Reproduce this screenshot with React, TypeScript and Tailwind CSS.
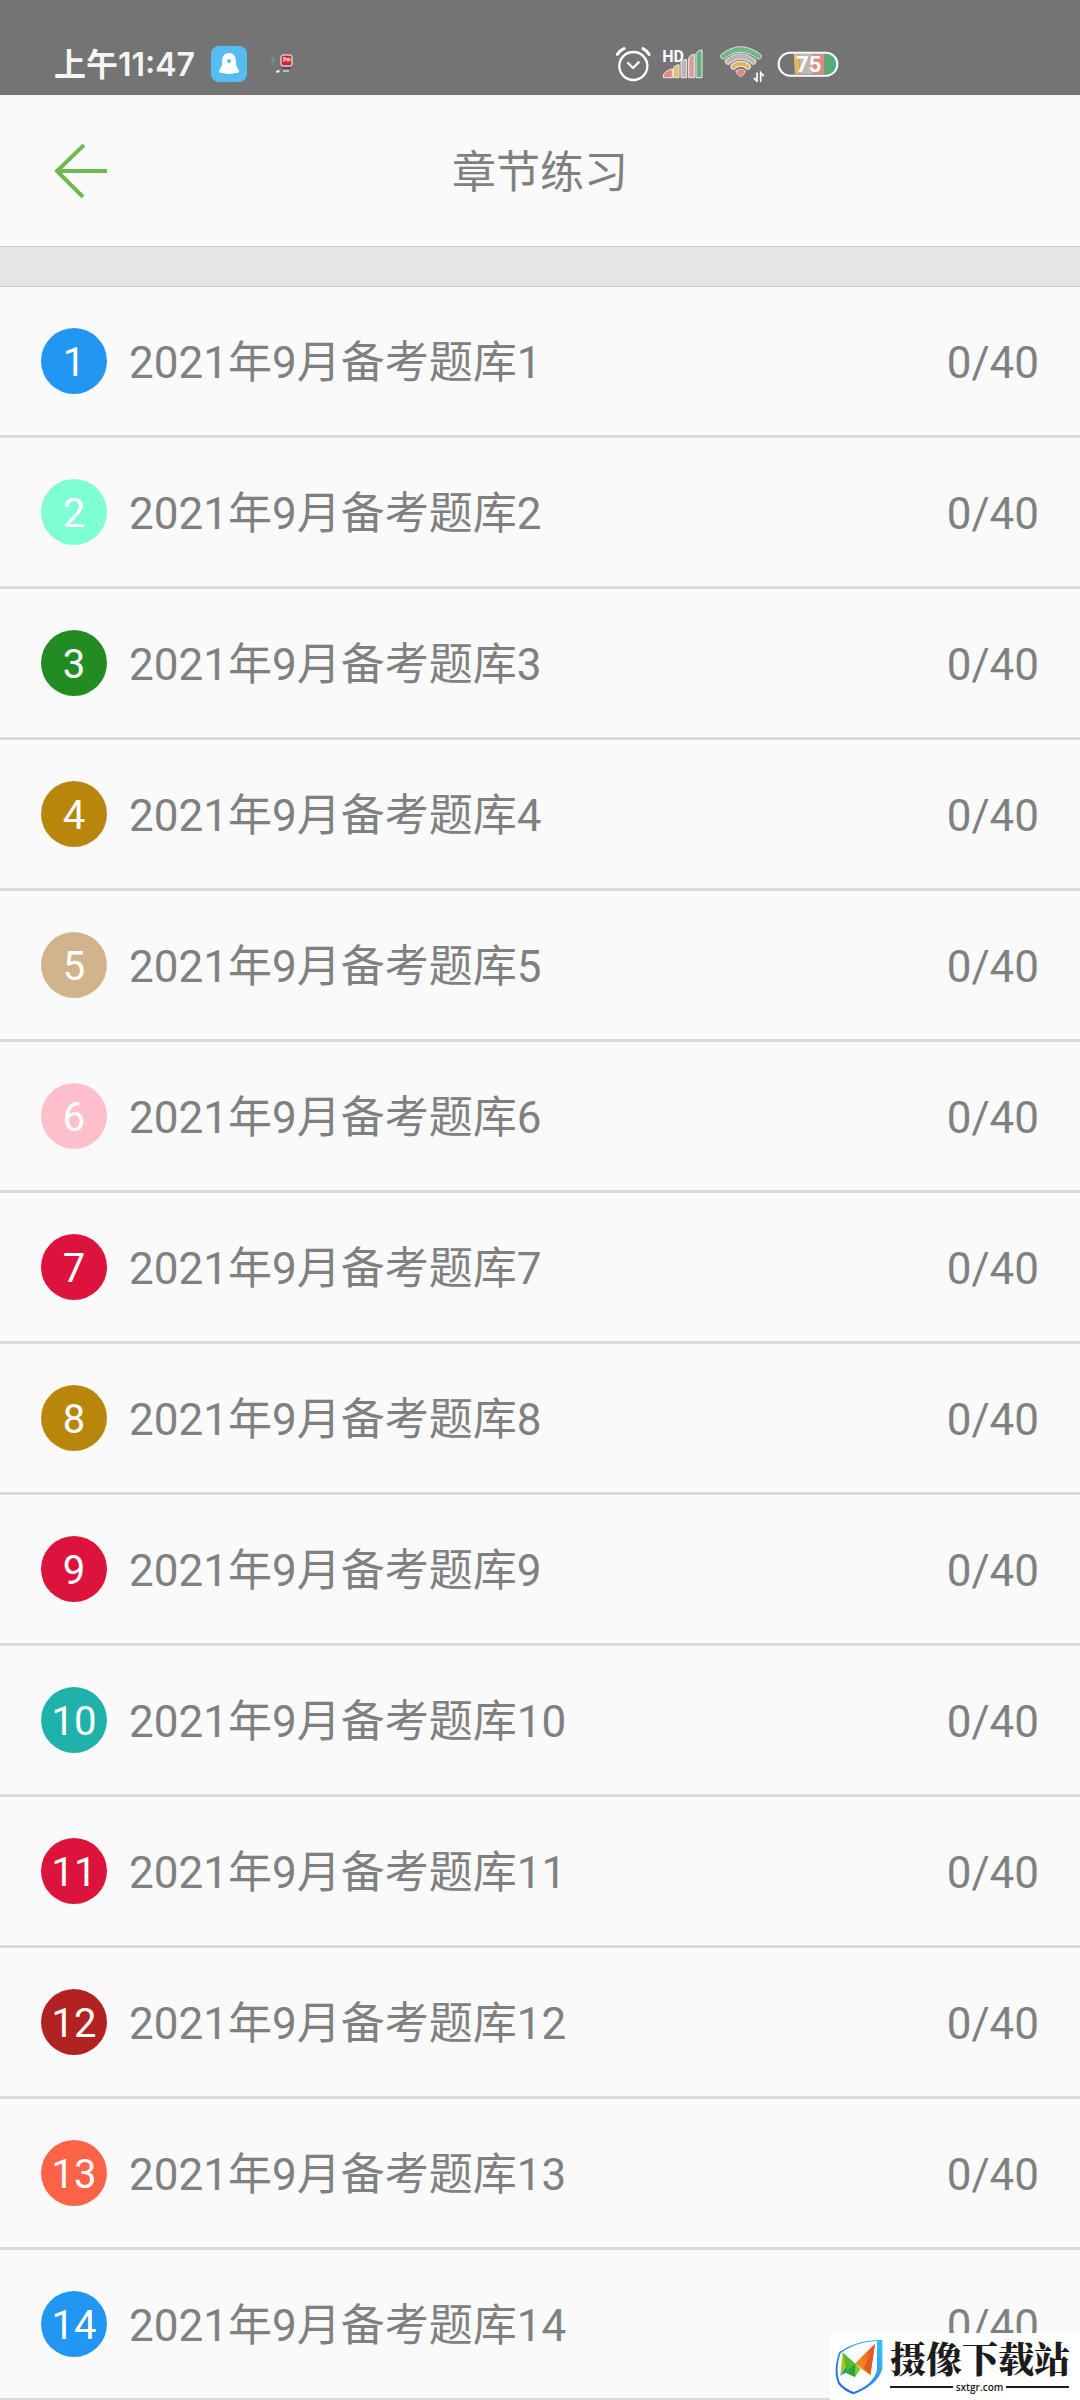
interface Chapter {
  id: number;
  color: string;
}

const chapters: Chapter[] = [
  { id: 1, color: "bg-[#2196f3]" },
  { id: 2, color: "bg-[#7fffd4]" },
  { id: 3, color: "bg-[#228b22]" },
  { id: 4, color: "bg-[#b8860b]" },
  { id: 5, color: "bg-[#d2b48c]" },
  { id: 6, color: "bg-[#ffc0cb]" },
  { id: 7, color: "bg-[#dc143c]" },
  { id: 8, color: "bg-[#b8860b]" },
  { id: 9, color: "bg-[#dc143c]" },
  { id: 10, color: "bg-[#20b2aa]" },
  { id: 11, color: "bg-[#dc143c]" },
  { id: 12, color: "bg-[#b22222]" },
  { id: 13, color: "bg-[#ff6347]" },
  { id: 14, color: "bg-[#2196f3]" },
];

function AlarmIcon() {
  return (
    <svg width="36" height="36" viewBox="80 78 108 108" fill="none" stroke="#fff" strokeLinecap="round" strokeLinejoin="round">
      <circle cx="135" cy="138" r="42" strokeWidth="7" />
      <path d="M119 129l15 15 17-17" strokeWidth="7" />
      <path d="M87 103q8-12 20-17M164 86q12 6 18 17" strokeWidth="9" />
    </svg>
  );
}

function SignalIcon() {
  return (
    <svg className="overflow-visible" width="40" height="30" viewBox="223 78 120 90">
      <g stroke="#eee" strokeWidth="3">
        <path d="M224 164v-8q10-16 27-18v26z" fill="#e8897e" />
        <path d="M254 164v-30q7-8 17-9v39z" fill="#e6bd6e" />
        <path d="M277 164v-47q8-8 17-8v55z" fill="#c0b4b4" />
        <path d="M300 164v-60q7-10 17-10v70z" fill="#d99e9a" />
        <path d="M322 164V92q6-11 18-11v83z" fill="#65b081" />
      </g>
      <text x="221" y="117" fill="#fff" fontFamily="Roboto, sans-serif" fontSize="48" fontWeight="700">HD</text>
    </svg>
  );
}

function WifiIcon() {
  return (
    <svg width="46" height="36" viewBox="387 78 138 108" fill="none" strokeLinecap="round">
      <g stroke="#f0f0f0" strokeWidth="18">
        <path d="M400 109q52-42 106 0" />
        <path d="M414 125q38-32 76 0" />
        <path d="M430 140q22-18 44 0" />
      </g>
      <path d="M400 109q52-42 106 0" stroke="#6fb68a" strokeWidth="14" />
      <path d="M414 125q38-32 76 0" stroke="#bcb5b5" strokeWidth="13" />
      <path d="M430 140q22-18 44 0" stroke="#e5b45f" strokeWidth="12" />
      <path d="M438 153q14-12 28 0 1 8-14 18-15-10-14-18z" fill="#e8837b" stroke="#f0f0f0" strokeWidth="2" />
      <path d="M501 159v25l-8-9M512 184v-26l8 9" stroke="#fff" strokeWidth="5" />
    </svg>
  );
}

function BatteryIcon() {
  return (
    <svg width="62" height="26" viewBox="563 94 186 78">
      <path d="M613 103h18v60h-14z" fill="#e5b860" />
      <path d="M631 103h40v60h-40z" fill="#c2b4b4" />
      <path d="M671 103h35v60h-35z" fill="#dc8b85" />
      <path d="M706 103h8a29 29 0 0 1 0 60h-8z" fill="#54ad78" />
      <rect x="568" y="99" width="176" height="69" rx="34" fill="none" stroke="#fff" strokeWidth="6" />
      <text x="658" y="156" fill="#fff" fontFamily="Roboto, sans-serif" fontSize="66" fontWeight="700" textAnchor="middle">75</text>
    </svg>
  );
}

function StatusBar() {
  return (
    <div className="flex h-[95px] shrink-0 items-center justify-between bg-[#747474] pt-8 pr-[241px] pl-[54px]">
      <div className="flex items-center">
        <span className="pt-[2px] font-['Inter','Noto_Sans_CJK_SC',sans-serif] text-[32px] leading-9 font-semibold text-[#f5f5f5]">上午11:47</span>
        <svg className="ml-4" width="36" height="36" viewBox="0 0 36 36">
          <rect width="36" height="36" rx="8" fill="#56bdf2" />
          <path d="M18 7c-5 0-7 4-7 9v3l-3 6c0 2 2 2 4 2q6 2 12 0c2 0 4 0 4-2l-3-6v-3c0-5-2-9-7-9z" fill="#fff" />
          <circle cx="18" cy="15" r="2" fill="#56bdf2" />
        </svg>
        <svg className="ml-6" width="22" height="20" viewBox="0 0 22 20">
          <path d="M0 3h2v3h1v2H0" fill="none" stroke="#6fa79a" />
          <rect x="10" y="1" width="11" height="11" rx="2" fill="#d3242e" stroke="#fff" />
          <path d="M13 4v4M12 4h3v3M17 4v4M16 5h3v2" fill="none" stroke="#fff" />
          <path d="M11 14h9" stroke="#333" />
          <path d="M12 17h6M5 18l3-2v2z" stroke="#fff" fill="#fff" />
        </svg>
      </div>
      <div className="flex items-center">
        <AlarmIcon />
        <span className="ml-3"><SignalIcon /></span>
        <span className="ml-4"><WifiIcon /></span>
        <span className="ml-3"><BatteryIcon /></span>
      </div>
    </div>
  );
}

function ChapterRow({ id, color }: Chapter) {
  return (
    <li className="border-b-[3px] border-[#dadada]">
      <a href={`#chapter-${id}`} className="flex h-[148px] items-center px-[41px]">
        <span className={`flex size-[66px] items-center justify-center rounded-full pt-1 text-[40px] text-white ${color}`}>{id}</span>
        <span className="ml-[22px] flex-1 pt-1">2021年9月备考题库{id}</span>
        <span className="pt-1">0/40</span>
      </a>
    </li>
  );
}

function Watermark() {
  return (
    <div className="absolute right-0 bottom-0 flex h-[67px] w-[250px] items-center bg-white pl-1 text-[#1c1c1c]">
      <svg width="50" height="58" viewBox="0 0 150 174">
        <defs>
          <linearGradient id="shield" x1="1" y1="0" x2="0" y2="1">
            <stop offset="0" stopColor="#35c8f8" />
            <stop offset="1" stopColor="#2457e8" />
          </linearGradient>
          <linearGradient id="wing" x1="1" y1="0" x2="0" y2="1">
            <stop offset="0" stopColor="#e94725" />
            <stop offset="1" stopColor="#f8a51c" />
          </linearGradient>
        </defs>
        <path d="M146 5C100 6 55 14 16 42 2 78 2 113 13 138c14 18 33 27 46 31 45-17 76-42 86-76V5z" fill="url(#shield)" />
        <path d="M129 9C90 11 53 22 20 45 8 79 8 109 17 133c13 17 29 24 42 29 37-15 62-34 70-67V9z" fill="#fff" />
        <path d="M26 43l38 34-30 28z" fill="#58b92f" />
        <path d="M26 43l10 47-17 23z" fill="#a5c91c" />
        <path d="M19 113l17-25 4 13z" fill="#168dd9" />
        <path d="M123 17L64 76l20 18 25 17z" fill="url(#wing)" />
        <path d="M123 17l-14 94-19-22z" fill="#df5825" />
        <path d="M64 76l-32 27 31 14 17-24z" fill="#78cc38" />
        <path d="M32 103l31 14 1-40z" fill="#2fa43a" />
      </svg>
      <div className="ml-[6px] w-[179px]">
        <div className="font-['Noto_Serif_CJK_SC','Noto_Sans_CJK_SC',serif] text-[36px] leading-[38px] font-black whitespace-nowrap">摄像下载站</div>
        <div className="flex items-center gap-[3px] pt-[2px] font-['Open_Sans',sans-serif] text-[10px] leading-4 font-semibold">
          <span className="h-[2px] flex-1 bg-[#1c1c1c]" />
          sxtgr.com
          <span className="h-[2px] flex-1 bg-[#1c1c1c]" />
        </div>
      </div>
    </div>
  );
}

export default function App() {
  return (
    <div className="relative flex h-screen flex-col overflow-hidden bg-[#fafafa] font-['Roboto','Noto_Sans_CJK_SC',sans-serif] text-[44px] leading-[60px] text-[#808080]">
      <StatusBar />
      <header className="grid h-[151px] shrink-0 grid-cols-[1fr_auto_1fr] items-center px-[54px]">
        <button aria-label="返回" className="justify-self-start">
          <svg width="54" height="54" viewBox="0 0 54 54" fill="none" stroke="#70b850" strokeWidth="4">
            <path d="M30 1L3 27l26 26M3 27h50" />
          </svg>
        </button>
        <h1 className="pt-1">章节练习</h1>
      </header>
      <div className="h-[41px] shrink-0 border-y border-[#cccccc] bg-[#e5e5e5]" />
      <ul className="min-h-0 flex-1 overflow-hidden">
        {chapters.map((chapter) => (
          <ChapterRow key={chapter.id} {...chapter} />
        ))}
      </ul>
      <Watermark />
    </div>
  );
}
